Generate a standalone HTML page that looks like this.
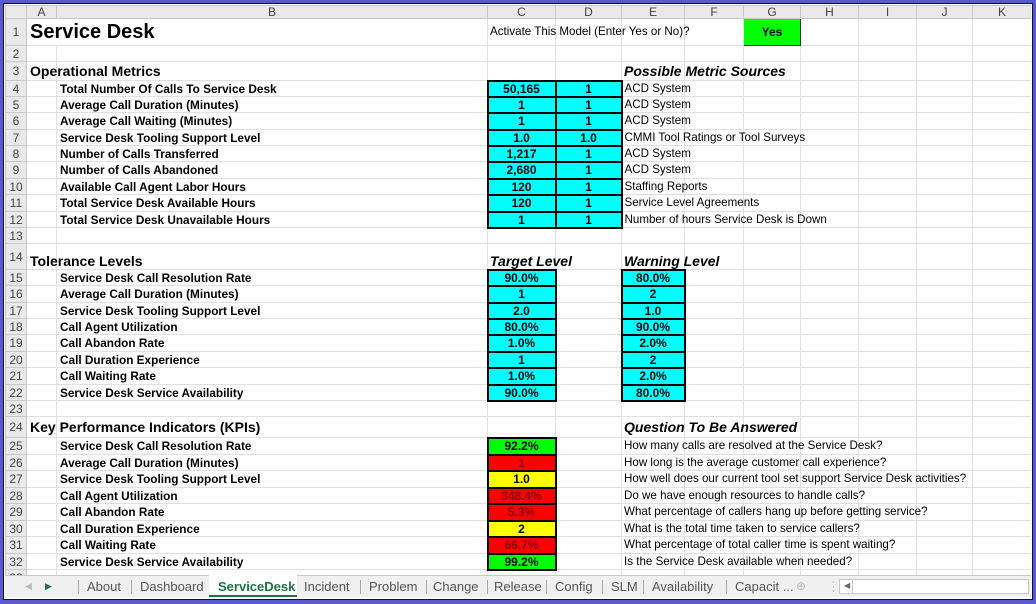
<!DOCTYPE html>
<html><head><meta charset="utf-8"><style>
*{margin:0;padding:0;box-sizing:border-box}
body{width:1036px;height:604px;overflow:hidden;background:#5a5ad0;font-family:"Liberation Sans",Arial,sans-serif;position:relative}
#frame{position:absolute;left:3px;top:3px;width:1030px;height:597px;border:1px solid #101040;background:#fff;overflow:hidden}
#wrap{position:absolute;left:1px;top:1px;width:1026px;height:571px;overflow:hidden}
table{border-collapse:collapse;table-layout:fixed;width:1026px}
td{border:1px solid #e0e0e0;font-size:11.6px;color:#000;white-space:nowrap;overflow:visible;padding:0 2px;vertical-align:middle;line-height:12px}
td.h{background:#e9e9e9;color:#444;text-align:center;font-size:12px;border-color:#c8c8c8}
tr.ch td{background:#e9e9e9;color:#444;text-align:center;border-color:#c8c8c8;height:13px;font-size:12px}
.lb{font-weight:bold;padding-left:3px;font-size:11.8px}
.cy{background:#00ffff;border:2px solid #000;text-align:center;font-weight:bold;font-size:12px}
.gr{background:#00ff00;border:2px solid #000;text-align:center;font-weight:bold;font-size:12px}
.rd{background:#ff0000;border:2px solid #000;text-align:center;font-weight:bold;color:#800000;font-size:12px}
.ye{background:#ffff00;border:2px solid #000;text-align:center;font-weight:bold;font-size:12px}
.hd{font-weight:bold;font-size:14px}
.hi{font-weight:bold;font-style:italic;font-size:14px}
#tabs{position:absolute;left:1px;top:571px;width:1026px;height:22px;background:#f0f0f0;border-top:1px solid #c8c8c8;font-size:13px;color:#555}
#tabs span{position:absolute;top:3px}
.sep{position:absolute;top:4px;width:1px;height:14px;background:#aaa}
</style></head><body>
<div id="frame">
<div id="wrap">
<table>
<colgroup><col style="width:21px"><col style="width:30px"><col style="width:431px"><col style="width:68px"><col style="width:66px"><col style="width:63px"><col style="width:59px"><col style="width:57px"><col style="width:58px"><col style="width:58px"><col style="width:56px"><col style="width:59px"></colgroup>
<tr class="ch"><td></td><td>A</td><td>B</td><td>C</td><td>D</td><td>E</td><td>F</td><td>G</td><td>H</td><td>I</td><td>J</td><td>K</td></tr>
<tr style="height:27px"><td class="h">1</td><td colspan="2" style="font-weight:bold;font-size:20px;padding-left:3px">Service Desk</td><td>Activate This Model (Enter Yes or No)?</td><td></td><td></td><td></td><td class="gr" style="border-width:1px;border-color:#333">Yes</td><td></td><td></td><td></td><td></td></tr>
<tr style="height:16px"><td class="h">2</td><td></td><td></td><td></td><td></td><td></td><td></td><td></td><td></td><td></td><td></td><td></td></tr>
<tr style="height:19px"><td class="h">3</td><td class="hd" style="padding-left:3px">Operational Metrics</td><td></td><td></td><td></td><td class="hi">Possible Metric Sources</td><td></td><td></td><td></td><td></td><td></td><td></td></tr>
<tr style="height:16px"><td class="h">4</td><td></td><td class="lb">Total Number Of Calls To Service Desk</td><td class="cy">50,165</td><td class="cy">1</td><td>ACD System</td><td></td><td></td><td></td><td></td><td></td><td></td></tr>
<tr style="height:16px"><td class="h">5</td><td></td><td class="lb">Average Call Duration (Minutes)</td><td class="cy">1</td><td class="cy">1</td><td>ACD System</td><td></td><td></td><td></td><td></td><td></td><td></td></tr>
<tr style="height:17px"><td class="h">6</td><td></td><td class="lb">Average Call Waiting (Minutes)</td><td class="cy">1</td><td class="cy">1</td><td>ACD System</td><td></td><td></td><td></td><td></td><td></td><td></td></tr>
<tr style="height:16px"><td class="h">7</td><td></td><td class="lb">Service Desk Tooling Support Level</td><td class="cy">1.0</td><td class="cy">1.0</td><td>CMMI Tool Ratings or Tool Surveys</td><td></td><td></td><td></td><td></td><td></td><td></td></tr>
<tr style="height:16px"><td class="h">8</td><td></td><td class="lb">Number of Calls Transferred</td><td class="cy">1,217</td><td class="cy">1</td><td>ACD System</td><td></td><td></td><td></td><td></td><td></td><td></td></tr>
<tr style="height:17px"><td class="h">9</td><td></td><td class="lb">Number of Calls Abandoned</td><td class="cy">2,680</td><td class="cy">1</td><td>ACD System</td><td></td><td></td><td></td><td></td><td></td><td></td></tr>
<tr style="height:16px"><td class="h">10</td><td></td><td class="lb">Available Call Agent Labor Hours</td><td class="cy">120</td><td class="cy">1</td><td>Staffing Reports</td><td></td><td></td><td></td><td></td><td></td><td></td></tr>
<tr style="height:17px"><td class="h">11</td><td></td><td class="lb">Total Service Desk Available Hours</td><td class="cy">120</td><td class="cy">1</td><td>Service Level Agreements</td><td></td><td></td><td></td><td></td><td></td><td></td></tr>
<tr style="height:16px"><td class="h">12</td><td></td><td class="lb">Total Service Desk Unavailable Hours</td><td class="cy">1</td><td class="cy">1</td><td>Number of hours Service Desk is Down</td><td></td><td></td><td></td><td></td><td></td><td></td></tr>
<tr style="height:16px"><td class="h">13</td><td></td><td></td><td></td><td></td><td></td><td></td><td></td><td></td><td></td><td></td><td></td></tr>
<tr style="height:26px"><td class="h">14</td><td class="hd" style="padding-left:3px;vertical-align:bottom;padding-bottom:2px">Tolerance Levels</td><td></td><td class="hi" style="vertical-align:bottom;padding-bottom:2px">Target Level</td><td></td><td class="hi" style="vertical-align:bottom;padding-bottom:2px">Warning Level</td><td></td><td></td><td></td><td></td><td></td><td></td></tr>
<tr style="height:16px"><td class="h">15</td><td></td><td class="lb">Service Desk Call Resolution Rate</td><td class="cy">90.0%</td><td></td><td class="cy">80.0%</td><td></td><td></td><td></td><td></td><td></td><td></td></tr>
<tr style="height:17px"><td class="h">16</td><td></td><td class="lb">Average Call Duration (Minutes)</td><td class="cy">1</td><td></td><td class="cy">2</td><td></td><td></td><td></td><td></td><td></td><td></td></tr>
<tr style="height:16px"><td class="h">17</td><td></td><td class="lb">Service Desk Tooling Support Level</td><td class="cy">2.0</td><td></td><td class="cy">1.0</td><td></td><td></td><td></td><td></td><td></td><td></td></tr>
<tr style="height:16px"><td class="h">18</td><td></td><td class="lb">Call Agent Utilization</td><td class="cy">80.0%</td><td></td><td class="cy">90.0%</td><td></td><td></td><td></td><td></td><td></td><td></td></tr>
<tr style="height:17px"><td class="h">19</td><td></td><td class="lb">Call Abandon Rate</td><td class="cy">1.0%</td><td></td><td class="cy">2.0%</td><td></td><td></td><td></td><td></td><td></td><td></td></tr>
<tr style="height:16px"><td class="h">20</td><td></td><td class="lb">Call Duration Experience</td><td class="cy">1</td><td></td><td class="cy">2</td><td></td><td></td><td></td><td></td><td></td><td></td></tr>
<tr style="height:17px"><td class="h">21</td><td></td><td class="lb">Call Waiting Rate</td><td class="cy">1.0%</td><td></td><td class="cy">2.0%</td><td></td><td></td><td></td><td></td><td></td><td></td></tr>
<tr style="height:16px"><td class="h">22</td><td></td><td class="lb">Service Desk Service Availability</td><td class="cy">90.0%</td><td></td><td class="cy">80.0%</td><td></td><td></td><td></td><td></td><td></td><td></td></tr>
<tr style="height:16px"><td class="h">23</td><td></td><td></td><td></td><td></td><td></td><td></td><td></td><td></td><td></td><td></td><td></td></tr>
<tr style="height:21px"><td class="h">24</td><td class="hd" style="padding-left:3px">Key Performance Indicators (KPIs)</td><td></td><td></td><td></td><td class="hi">Question To Be Answered</td><td></td><td></td><td></td><td></td><td></td><td></td></tr>
<tr style="height:17px"><td class="h">25</td><td></td><td class="lb">Service Desk Call Resolution Rate</td><td class="gr">92.2%</td><td></td><td>How many calls are resolved at the Service Desk?</td><td></td><td></td><td></td><td></td><td></td><td></td></tr>
<tr style="height:16px"><td class="h">26</td><td></td><td class="lb">Average Call Duration (Minutes)</td><td class="rd">1</td><td></td><td>How long is the average customer call experience?</td><td></td><td></td><td></td><td></td><td></td><td></td></tr>
<tr style="height:17px"><td class="h">27</td><td></td><td class="lb">Service Desk Tooling Support Level</td><td class="ye">1.0</td><td></td><td>How well does our current tool set support Service Desk activities?</td><td></td><td></td><td></td><td></td><td></td><td></td></tr>
<tr style="height:16px"><td class="h">28</td><td></td><td class="lb">Call Agent Utilization</td><td class="rd">348.4%</td><td></td><td>Do we have enough resources to handle calls?</td><td></td><td></td><td></td><td></td><td></td><td></td></tr>
<tr style="height:17px"><td class="h">29</td><td></td><td class="lb">Call Abandon Rate</td><td class="rd">5.3%</td><td></td><td>What percentage of callers hang up before getting service?</td><td></td><td></td><td></td><td></td><td></td><td></td></tr>
<tr style="height:16px"><td class="h">30</td><td></td><td class="lb">Call Duration Experience</td><td class="ye">2</td><td></td><td>What is the total time taken to service callers?</td><td></td><td></td><td></td><td></td><td></td><td></td></tr>
<tr style="height:17px"><td class="h">31</td><td></td><td class="lb">Call Waiting Rate</td><td class="rd">66.7%</td><td></td><td>What percentage of total caller time is spent waiting?</td><td></td><td></td><td></td><td></td><td></td><td></td></tr>
<tr style="height:16px"><td class="h">32</td><td></td><td class="lb">Service Desk Service Availability</td><td class="gr">99.2%</td><td></td><td>Is the Service Desk available when needed?</td><td></td><td></td><td></td><td></td><td></td><td></td></tr>
<tr style="height:16px"><td class="h">33</td><td></td><td></td><td></td><td></td><td></td><td></td><td></td><td></td><td></td><td></td><td></td></tr>
</table>
</div>
<div id="tabs">
<span style="left:20px;color:#bbb;font-size:9px;top:5px">◀</span>
<span style="left:40px;color:#217346;font-size:9px;top:5px">▶</span>
<div class="sep" style="left:73px"></div>
<span style="left:82px">About</span>
<div class="sep" style="left:126px"></div>
<span style="left:135px">Dashboard</span>
<div style="position:absolute;left:204px;top:-1px;width:88px;height:22px;background:#fff;border-bottom:2px solid #217346"></div>
<span style="left:213px;color:#217346;font-weight:bold">ServiceDesk</span>
<span style="left:299px">Incident</span>
<div class="sep" style="left:355px"></div>
<span style="left:364px">Problem</span>
<div class="sep" style="left:421px"></div>
<span style="left:428px">Change</span>
<div class="sep" style="left:482px"></div>
<span style="left:489px">Release</span>
<div class="sep" style="left:541px"></div>
<span style="left:550px">Config</span>
<div class="sep" style="left:597px"></div>
<span style="left:606px">SLM</span>
<div class="sep" style="left:638px"></div>
<span style="left:647px">Availability</span>
<div class="sep" style="left:721px"></div>
<span style="left:730px">Capacit ...</span>
<span style="left:791px;color:#bbb;font-size:12px;top:3px">⊕</span>
<span style="left:822px;color:#bbb">⋮</span>
<div style="position:absolute;left:834px;top:3px;width:190px;height:15px;background:#fff;border:1px solid #c8c8c8"><span style="left:4px;top:1px;font-size:8px;color:#666">◀</span><div style="position:absolute;left:12px;top:0;width:1px;height:13px;background:#c8c8c8"></div></div>
</div>
</div>
</body></html>
